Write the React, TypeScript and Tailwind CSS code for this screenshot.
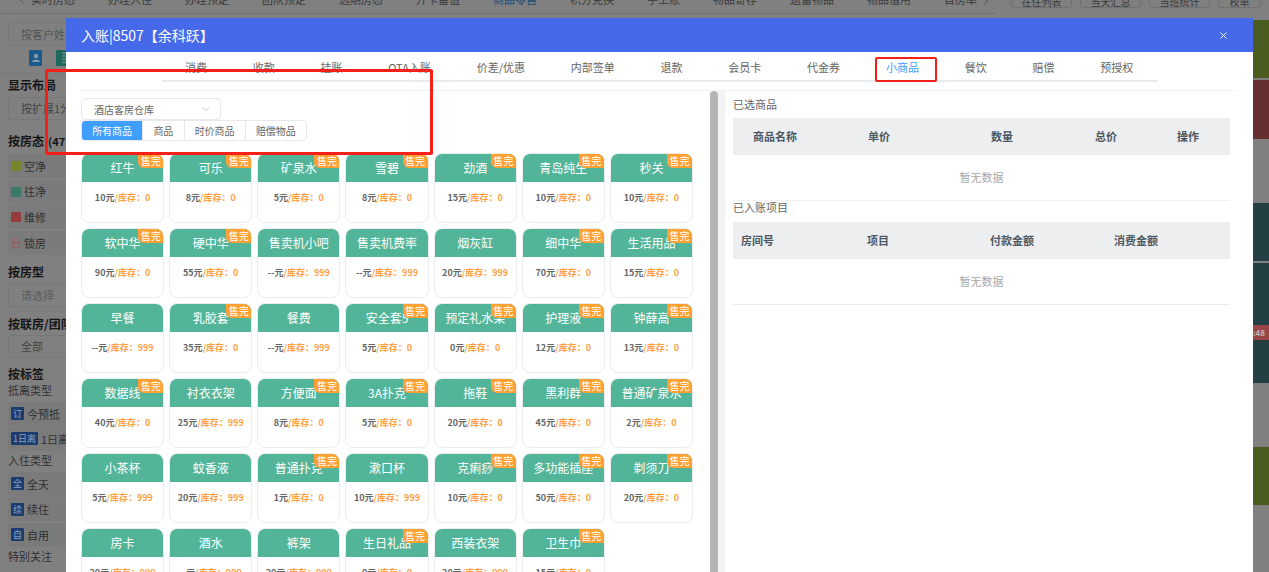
import React from 'react';
import { ChevronDown, ChevronLeft, ChevronRight, Lock, X } from 'lucide-react';

type Product = { name: string; price: string; stock: number };

const products: Product[] = [
  { name: '红牛', price: '10', stock: 0 },
  { name: '可乐', price: '8', stock: 0 },
  { name: '矿泉水', price: '5', stock: 0 },
  { name: '雪碧', price: '8', stock: 0 },
  { name: '劲酒', price: '15', stock: 0 },
  { name: '青岛纯生', price: '10', stock: 0 },
  { name: '秒关', price: '10', stock: 0 },
  { name: '软中华', price: '90', stock: 0 },
  { name: '硬中华', price: '55', stock: 0 },
  { name: '售卖机小吧', price: '--', stock: 999 },
  { name: '售卖机费率', price: '--', stock: 999 },
  { name: '烟灰缸', price: '20', stock: 999 },
  { name: '细中华', price: '70', stock: 0 },
  { name: '生活用品', price: '15', stock: 0 },
  { name: '早餐', price: '--', stock: 999 },
  { name: '乳胶套', price: '35', stock: 0 },
  { name: '餐费', price: '--', stock: 999 },
  { name: '安全套5', price: '5', stock: 0 },
  { name: '预定礼水果', price: '0', stock: 0 },
  { name: '护理液', price: '12', stock: 0 },
  { name: '钟薛高', price: '13', stock: 0 },
  { name: '数据线', price: '40', stock: 0 },
  { name: '衬衣衣架', price: '25', stock: 999 },
  { name: '方便面', price: '8', stock: 0 },
  { name: '3A扑克', price: '5', stock: 0 },
  { name: '拖鞋', price: '20', stock: 0 },
  { name: '黑利群', price: '45', stock: 0 },
  { name: '普通矿泉水', price: '2', stock: 0 },
  { name: '小茶杯', price: '5', stock: 999 },
  { name: '蚊香液', price: '20', stock: 999 },
  { name: '普通扑克', price: '1', stock: 0 },
  { name: '漱口杯', price: '10', stock: 999 },
  { name: '克痢痧', price: '10', stock: 0 },
  { name: '多功能插座', price: '50', stock: 0 },
  { name: '剃须刀', price: '20', stock: 0 },
  { name: '房卡', price: '20', stock: 999 },
  { name: '酒水', price: '--', stock: 999 },
  { name: '裤架', price: '20', stock: 999 },
  { name: '生日礼品', price: '0', stock: 0 },
  { name: '西装衣架', price: '20', stock: 999 },
  { name: '卫生巾', price: '15', stock: 0 },
];

const topTabs = ['实时房态', '办理入住', '办理预定', '团队预定', '远期房态', '开卡留值', '商品零售', '积分兑换', '手工账', '物品寄存', '遗留物品', '物品借用', '首房率'];
const topButtons = ['在住列表', '当天汇总', '当班统计', '校单'];
const modalTabs = ['消费', '收款', '挂账', 'OTA入账', '价差/优惠', '内部签单', '退款', '会员卡', '代金券', '小商品', '餐饮', '赔偿', '预授权'];
const filters = ['所有商品', '商品', '时价商品', '赔偿物品'];

const Tile = ({ children, className = '' }: { children: React.ReactNode; className?: string }) => (
  <div className={`flex h-6 items-center gap-[3px] rounded-[3px] bg-[#7b7b7b] pl-[3px] text-[11px] text-[#303030] ${className}`}>{children}</div>
);

const Tag = ({ label, wide }: { label: string; wide?: boolean }) => (
  <span className={`flex h-[13px] items-center justify-center rounded-[1px] bg-[#1c3c6e] text-[9px] leading-none text-[#8da3c5] ${wide ? 'w-[27px]' : 'w-[13px]'}`}>{label}</span>
);

const Swatch = ({ className }: { className: string }) => <span className={`h-[10px] w-[10px] rounded-[1px] ${className}`} />;

const Sidebar = () => (
  <aside className="w-[215px] shrink-0">
    <div className="ml-2 mt-2 flex h-6 w-[200px] items-center rounded-[3px] border border-[#777] pl-3 text-[11px] text-[#555]">按客户姓名</div>
    <div className="ml-7 mt-1 flex h-4 gap-[13px]">
      <svg viewBox="0 0 14 16" className="h-4 w-[14px]">
        <rect x="1" y="0" width="13" height="16" rx="1" fill="#1b5a8c" />
        <circle cx="8" cy="6" r="2.2" fill="#8a9aa8" />
        <path d="M4 12c0-3 8-3 8 0z" fill="#8a9aa8" />
      </svg>
      <svg viewBox="0 0 14 16" className="h-4 w-[14px]">
        <rect x="1" y="0" width="13" height="16" rx="1" fill="#1d6a5a" />
        <path d="M7 3h5M7 6h5M7 9h5M7 12h5" stroke="#8a9aa8" strokeWidth="1" />
      </svg>
    </div>
    <div className="mt-[7px] h-px bg-[#777]" />
    <div className="ml-2">
      <div className="flex h-[22px] items-center text-[12px] font-bold text-[#151515]">显示布局</div>
      <div className="mt-px flex h-[23px] items-center rounded-[3px] border border-[#777] pl-3 text-[11px] text-[#444]">按扩展1分</div>
      <div className="mt-[10px] flex h-[22px] items-center gap-1 text-[12px] font-bold text-[#151515]">按房态 <span className="text-[11px]">(47</span></div>
      <div className="mt-[2px] flex flex-col gap-[1.67px]">
        <Tile><Swatch className="bg-[#76852a]" />空净</Tile>
        <Tile><Swatch className="bg-[#3b7b6b]" />往净</Tile>
        <Tile><Swatch className="bg-[#943b3b]" />维修</Tile>
        <Tile><Lock className="h-[10px] w-[10px] text-[#a85050]" />锁房</Tile>
      </div>
      <div className="mt-[6px] flex h-[22px] items-center text-[12px] font-bold text-[#151515]">按房型</div>
      <div className="mt-px flex h-[23px] items-center rounded-[3px] border border-[#777] pl-3 text-[11px] text-[#5c5c5c]">请选择</div>
      <div className="mt-[6px] flex h-[22px] items-center text-[12px] font-bold text-[#151515]">按联房/团队</div>
      <div className="flex h-[23px] items-center rounded-[3px] border border-[#777] pl-3 text-[11px] text-[#444]">全部</div>
      <div className="mt-[7px] flex h-[18px] items-center text-[12px] font-bold text-[#151515]">按标签</div>
      <div className="flex h-[14px] items-center text-[11px] text-[#303030]">抵离类型</div>
      <div className="mt-[5px] flex flex-col gap-px">
        <Tile><Tag label="订" />今预抵</Tile>
        <Tile><Tag label="1日离" wide />1日离</Tile>
      </div>
      <div className="mt-[2px] flex h-[14px] items-center text-[11px] text-[#303030]">入住类型</div>
      <div className="mt-[5px] flex flex-col gap-[1.5px]">
        <Tile><Tag label="全" />全天</Tile>
        <Tile><Tag label="续" />续住</Tile>
        <Tile><Tag label="自" />自用</Tile>
      </div>
      <div className="mt-[2px] flex h-[14px] items-center text-[11px] text-[#303030]">特别关注</div>
    </div>
  </aside>
);

const RoomStrip = () => (
  <div className="flex w-4 shrink-0 flex-col">
    <div className="mt-[6px] h-[58px] bg-[#4a5c1f]" />
    <div className="mt-[2px] h-[59px] bg-[#662f2f]" />
    <div className="mt-[64px] h-[58px] bg-[#243f44]" />
    <div className="mt-[2px] h-[120px] bg-[#243f44] pt-[62px]">
      <div className="h-[15px] bg-[#9a4545] text-[8px] font-bold leading-[15px] text-[#bbb]">:48</div>
    </div>
    <div className="mt-[64px] h-[58px] bg-[#4a5c1f]" />
  </div>
);

const ProductCard = ({ item }: { item: Product }) => (
  <div className="relative h-[70px] overflow-hidden rounded-[8px] border border-[#ececec] bg-white">
    <div className="flex h-[28px] items-center justify-center bg-[#52b59a] text-[12px] text-white">{item.name}</div>
    {item.stock === 0 && (
      <span className="absolute right-0 top-0 h-[14px] w-[25px] rounded-bl-[6px] bg-[#ffa033] text-center text-[10px] leading-[13px] text-white">售完</span>
    )}
    <p className="mt-[10px] text-center text-[9px] font-bold leading-[12px] text-[#ff9f43]">
      <span className="text-[#666]">{item.price}元</span>/库存：{item.stock}
    </p>
  </div>
);

const HeaderRow = ({ cols, className }: { cols: string[]; className: string }) => (
  <div className={`grid h-[37px] items-center bg-[#edeef0] text-[11px] font-bold text-[#4c5864] ${className}`}>
    {cols.map((c) => (
      <span key={c}>{c}</span>
    ))}
  </div>
);

const Empty = () => <div className="flex h-[45px] items-center justify-center text-[11px] text-[#a8a8a8]">暂无数据</div>;

const ChargeModal = () => (
  <div className="absolute left-[66px] top-[18px] h-[570px] w-[1187px] bg-white">
    <div className="flex h-[34px] items-center justify-between bg-[#4669ea] pl-[15px] pr-[24px] text-white">
      <span className="text-[14px]">入账|8507【余科跃】</span>
      <X className="h-[11px] w-[11px]" strokeWidth={2} />
    </div>
    <div className="ml-[96px] flex h-[30px] w-[995px] border-b-2 border-[#e8eaf0]">
      {modalTabs.map((tab) => (
        <span key={tab} className={`relative flex h-[30px] shrink-0 items-center px-[22.9px] text-[11px] ${tab === '小商品' ? 'text-[#409eff]' : 'text-[#666]'}`}>
          {tab}
          {tab === '小商品' && <i className="absolute bottom-0 left-[23px] right-[23px] h-[2px] bg-[#409eff]" />}
        </span>
      ))}
    </div>
    <div className="ml-[15px] mt-2 flex w-[1156px] border-t border-[#f0f1f3]">
      <div className="h-[500px] w-[629px] shrink-0 overflow-hidden">
        <div className="mt-[7px] flex h-[22px] w-[140px] items-center justify-between rounded-[4px] border border-[#e8e8ec] pl-3 pr-2 text-[10px] text-[#666]">
          酒店客房仓库
          <ChevronDown className="h-3 w-3 text-[#b4b4b4]" strokeWidth={1.5} />
        </div>
        <div className="flex h-[21px] w-[226px] overflow-hidden rounded-[4px] border border-[#e8e8ec] text-[10px] text-[#666]">
          {filters.map((f, i) => (
            <span key={f} className={`flex flex-auto items-center justify-center ${i === 0 ? 'bg-[#409eff] text-white' : 'border-l border-[#e8e8ec]'}`}>{f}</span>
          ))}
        </div>
        <div className="mt-3 grid w-[612px] grid-cols-7 gap-[5px]">
          {products.map((p) => (
            <ProductCard key={p.name} item={p} />
          ))}
        </div>
      </div>
      <div className="h-[500px] w-2 shrink-0 rounded-t-[4px] bg-[#b5b5b5]" />
      <div className="h-[500px] w-[7px] shrink-0 bg-[#f3f3f3]" />
      <div className="w-[505px] pl-2">
        <div className="flex h-[27px] items-center text-[11px] text-[#666]">已选商品</div>
        <HeaderRow cols={['商品名称', '单价', '数量', '总价', '操作']} className="grid-cols-[115px_123px_104px_82px_1fr] pl-5" />
        <Empty />
        <div className="h-px bg-[#f0f1f3]" />
        <div className="flex h-[21px] items-start text-[11px] leading-[13px] text-[#666]">已入账项目</div>
        <HeaderRow cols={['房间号', '项目', '付款金额', '消费金额']} className="grid-cols-[126px_123px_124px_1fr] pl-2" />
        <Empty />
        <div className="h-px bg-[#ebedf0]" />
      </div>
    </div>
  </div>
);

export default function App() {
  return (
    <div className="relative h-[572px] w-full overflow-hidden whitespace-nowrap bg-[#808080] font-['Noto_Sans_CJK_SC','Liberation_Sans',sans-serif]">
      <div className="flex h-[14px] items-start text-[11px] leading-[14px] text-[#3a3a3a]">
        <div className="flex h-[14px] w-[995px] border-b border-[#707070] pl-4">
          <ChevronLeft className="mr-[3px] h-[14px] w-[12px] -translate-y-[7px] text-[#555]" />
          {topTabs.map((t) => (
            <span key={t} className={`relative -mt-[8px] mr-[33px] shrink-0 ${t === '商品零售' ? 'text-[#1d4f75]' : ''}`}>
              {t}
              {t === '商品零售' && <i className="absolute -bottom-[7px] left-0 right-0 h-px bg-[#1d5c8c]" />}
            </span>
          ))}
          <ChevronRight className="-ml-[30px] h-[14px] w-[12px] -translate-y-[6px] text-[#555]" />
        </div>
        <div className="ml-[16px] flex gap-2">
          {topButtons.map((b) => (
            <span key={b} className={`-mt-[5px] flex h-[13px] items-center justify-center rounded-[3px] border border-[#707070] text-[10px] ${b === '校单' ? 'w-[43px]' : 'w-[61px]'}`}>{b}</span>
          ))}
        </div>
      </div>
      <div className="flex justify-between">
        <Sidebar />
        <RoomStrip />
      </div>
      <ChargeModal />
      <div className="absolute left-[45px] top-[69px] h-[86px] w-[388px] rounded-[2px] border-[3px] border-[#f5201a]" />
      <div className="absolute left-[875px] top-[57px] h-[25px] w-[62px] rounded-[2px] border-2 border-[#f5201a]" />
    </div>
  );
}
